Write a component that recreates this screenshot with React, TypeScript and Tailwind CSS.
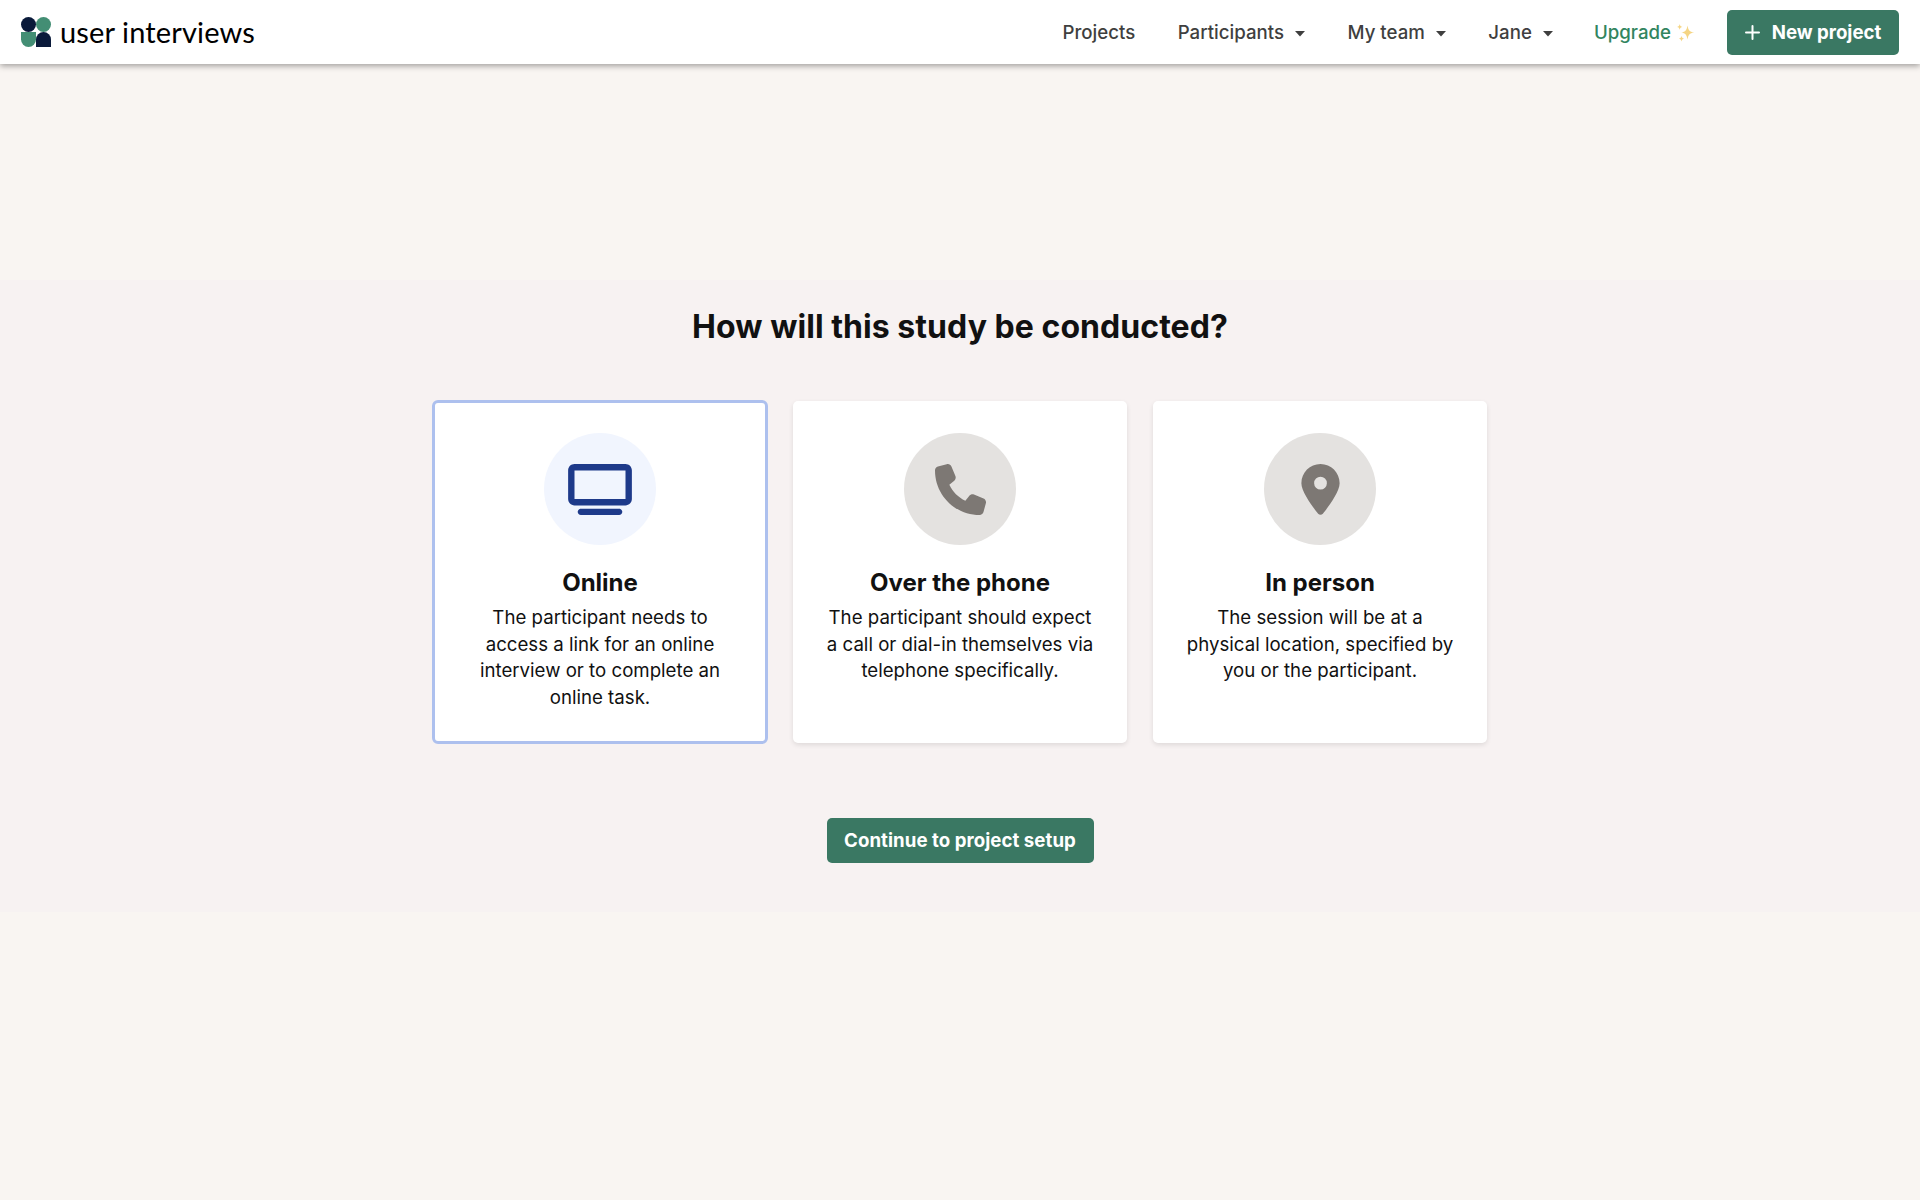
import type { ReactNode } from "react";
import { FaLocationDot, FaPhone, FaTv } from "react-icons/fa6";

const Logo = () => (
  <a href="#" className="flex items-center">
    <svg className="w-[30px] h-[30px]" viewBox="0 0 30 30">
      <circle cx="7.5" cy="7.5" r="7.5" fill="#0a1a3a" />
      <circle cx="22.5" cy="7.5" r="7.5" fill="#438e74" />
      <path d="M0 15h15v7.5a7.5 7.5 0 0 1-15 0z" fill="#438e74" />
      <path d="M15 30v-7.5a7.5 7.5 0 0 1 15 0V30z" fill="#0a1a3a" />
    </svg>
    <span className="ml-[9px] pb-px font-[Lato] text-[29px] leading-none tracking-[0.14px] text-black whitespace-nowrap">
      user interviews
    </span>
  </a>
);

const Sparkles = () => (
  <svg className="w-[18px] h-[18px]" viewBox="0 0 18 18" fill="#f5d584">
    <path d="M10.500 1.500c.8 4.600 1.900 6.200 6.700 7-4.800.8-5.900 2.400-6.700 7-.8-4.600-1.900-6.200-6.200-7 4.300-.8 5.400-2.400 6.200-7z" />
    <path d="M2.700 0c.4 2 .9 2.500 2.700 2.900-1.800.4-2.300.9-2.700 2.900C2.300 3.800 1.800 3.300 0 2.900 1.800 2.500 2.300 2 2.700 0z" />
    <path d="M4.500 11.800c.4 2 .9 2.500 2.600 2.900-1.700.4-2.200.9-2.600 2.900-.4-2-.9-2.500-2.600-2.900 1.700-.4 2.200-.9 2.600-2.900z" />
  </svg>
);

interface NavItemProps {
  label: string;
  menu?: boolean;
}

const NavItem = ({ label, menu = false }: NavItemProps) => (
  <a href="#" className="flex items-center text-[#3f3f3f]">
    <span>{label}</span>
    {menu && (
      <svg className="w-[10px] h-[6px] ml-[11px] mt-0.5" viewBox="0 0 10 6" fill="currentColor">
        <path d="M0 0h10L5 5.500z" />
      </svg>
    )}
  </a>
);

interface OptionCardProps {
  title: string;
  lines: string[];
  icon: ReactNode;
  selected?: boolean;
}

const OptionCard = ({ title, lines, icon, selected = false }: OptionCardProps) => (
  <button
    className={`flex flex-col items-center w-[334px] h-[342px] pt-8 bg-white rounded-[5px] ${
      selected
        ? "outline-3 -outline-offset-2 outline-[#adc0ee]"
        : "shadow-[0_2px_5px_rgba(0,0,0,0.1)]"
    }`}
  >
    <div
      className={`flex items-center justify-center w-28 h-28 rounded-full ${
        selected ? "bg-[#f1f5fe] text-[#1e3a8a]" : "bg-[#e4e2e0] text-[#7d7874]"
      }`}
    >
      {icon}
    </div>
    <h2 className="mt-[22px] text-[24px] leading-8 font-bold text-[#111]">{title}</h2>
    <p className="mt-1.5 text-[18.67px] leading-[26.67px] text-[#111]">
      {lines.map((line) => (
        <span key={line} className="block whitespace-nowrap">
          {line}
        </span>
      ))}
    </p>
  </button>
);

export default function App() {
  return (
    <div className="min-h-[1200px] bg-[#f9f5f2] font-[Inter,sans-serif]">
      {/* Top navigation */}
      <header className="relative flex items-center justify-between h-16 pl-[21px] pr-[21px] bg-white shadow-[0_2px_6px_rgba(0,0,0,0.36)]">
        <Logo />
        <nav className="flex items-center text-[18.67px] font-medium whitespace-nowrap">
          <div className="flex items-center gap-[42.5px] pt-0.5">
            <NavItem label="Projects" />
            <NavItem label="Participants" menu />
            <NavItem label="My team" menu />
            <NavItem label="Jane" menu />
            <a href="#" className="flex items-center gap-1.5 -ml-[1.5px] text-[#32855f]">
              Upgrade <Sparkles />
            </a>
          </div>
          <button className="flex items-center justify-center w-[172px] h-[45px] ml-8 pt-px gap-3 rounded-[5px] bg-[#3a7863] text-white font-bold">
            <svg className="w-[15px] h-[15px]" viewBox="0 0 15 15" stroke="currentColor" strokeWidth="2" strokeLinecap="round">
              <path d="M7.500 1v13M1 7.500h13" />
            </svg>
            New project
          </button>
        </nav>
      </header>

      {/* Study type picker */}
      <main className="pt-[216px]">
        <section className="flex flex-col items-center h-[632px] bg-[#f7f2f2]">
          <h1 className="mt-[27px] text-[32px] leading-10 font-bold tracking-[0.05px] text-[#111]">
            How will this study be conducted?
          </h1>
          <div className="flex gap-[26px] mt-[54px]">
            <OptionCard
              selected
              title="Online"
              icon={<FaTv className="w-16 h-[51px]" />}
              lines={["The participant needs to", "access a link for an online", "interview or to complete an", "online task."]}
            />
            <OptionCard
              title="Over the phone"
              icon={<FaPhone className="w-[51px] h-[51px]" />}
              lines={["The participant should expect", "a call or dial-in themselves via", "telephone specifically."]}
            />
            <OptionCard
              title="In person"
              icon={<FaLocationDot className="w-[51px] h-[51px]" />}
              lines={["The session will be at a", "physical location, specified by", "you or the participant."]}
            />
          </div>
          <button className="w-[267px] h-[45px] mt-[74.5px] pt-px rounded-[5px] bg-[#3a7863] text-[18.67px] font-bold tracking-[0.05px] text-white whitespace-nowrap">
            Continue to project setup
          </button>
        </section>
      </main>
    </div>
  );
}
